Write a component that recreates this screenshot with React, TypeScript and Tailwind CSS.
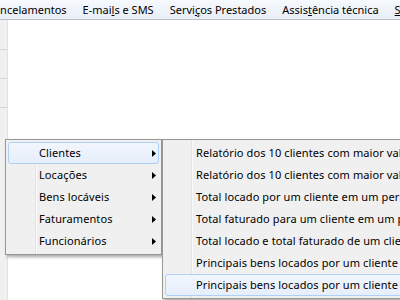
import React from 'react';

const mainItems = ['Clientes', 'Locações', 'Bens locáveis', 'Faturamentos', 'Funcionários'];

const subItems = [
  'Relatório dos 10 clientes com maior valor locado',
  'Relatório dos 10 clientes com maior valor faturado',
  'Total locado por um cliente em um período',
  'Total faturado para um cliente em um período',
  'Total locado e total faturado de um cliente',
  'Principais bens locados por um cliente',
  'Principais bens locados por um cliente em um período',
];

const Arrow = () => (
  <svg width="4" height="7" viewBox="0 0 4 7" className="absolute right-[2px] top-[7px]">
    <path d="M0 0 L4 3.5 L0 7 Z" fill="#000" />
  </svg>
);

const App = () => {
  return (
    <div className="relative w-[400px] h-[300px] overflow-hidden bg-white font-['Noto_Sans',sans-serif] text-[11px] text-black">
      {/* menu bar */}
      <div className="h-[20px] flex items-center pt-[2px] whitespace-nowrap bg-gradient-to-b from-[#f6f9fd] to-[#e9eef7] border-b border-[#b9c0cb] -ml-[21px]">
        <span className="px-[8px]">Cancelamentos</span>
        <span className="px-[8px]">E-mai<u>l</u>s e SMS</span>
        <span className="px-[8px]">Servi<u>ç</u>os Prestados</span>
        <span className="px-[8px]">Assis<u>t</u>ência técnica</span>
        <span className="px-[8px]"><u>S</u>air</span>
      </div>

      {/* body: left strip + white area */}
      <div className="flex h-[280px]">
        <div className="w-[8px] bg-[#f0f0f0] border-r border-[#e2e2e2] flex flex-col">
          <div className="h-[30px] border-b border-[#d6d6d6]" />
          <div className="h-[29px] border-b border-[#d6d6d6]" />
          <div className="h-[29px] border-b border-[#d6d6d6]" />
          <div className="h-[145px]" />
        </div>
        <div className="flex-1 bg-white" />
      </div>

      {/* first menu */}
      <div className="absolute left-[5px] top-[139px] w-[157px] bg-[#f0f0f0] border border-[#979797] py-[2px] tracking-[0.1px] shadow-[2px_2px_3px_rgba(0,0,0,0.35)]">
        <div className="absolute left-[29px] top-0 bottom-0 w-[2px] border-l border-[#e2e3e3] bg-white/60" />
        {mainItems.map((t, i) => (
          <div
            key={t}
            className={`relative h-[22px] mx-[2px] flex items-center pl-[30px] rounded-[3px] border ${
              i === 0 ? 'border-[#aecff7] bg-gradient-to-b from-[#f2f6fd] to-[#e5eefb]' : 'border-transparent'
            }`}
          >
            {t}
            <Arrow />
          </div>
        ))}
      </div>

      {/* submenu */}
      <div className="absolute left-[162px] top-[139px] w-[260px] bg-[#f0f0f0] border border-[#979797] py-[2px] tracking-[0.1px] shadow-[2px_2px_3px_rgba(0,0,0,0.35)]">
        <div className="absolute left-[28px] top-0 bottom-0 w-[2px] border-l border-[#e2e3e3] bg-white/60" />
        {subItems.map((t, i) => (
          <div
            key={i}
            className={`relative h-[22px] mx-[2px] flex items-center pl-[30px] rounded-[3px] border whitespace-nowrap ${
              i === subItems.length - 1 ? 'border-[#aecff7] bg-gradient-to-b from-[#f2f6fd] to-[#e5eefb]' : 'border-transparent'
            }`}
          >
            {t}
          </div>
        ))}
      </div>
    </div>
  );
};

export default App;
